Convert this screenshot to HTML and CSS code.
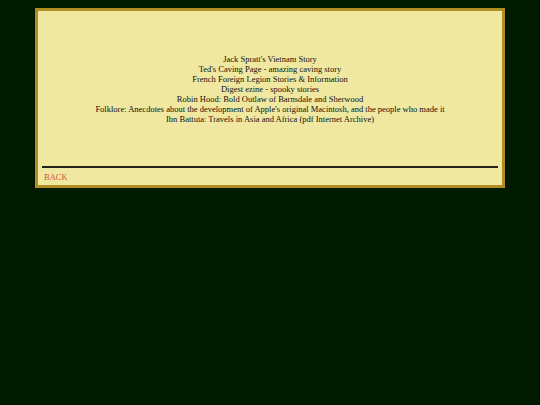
FILE: index.html
```html
<!DOCTYPE html>
<html>
<head>
<meta charset="utf-8">
<link rel="stylesheet" href="styles.css">
</head>
<body>
<div class="box">
  <div class="links">
    <a href="#">Jack Spratt's Vietnam Story</a>
    <a href="#">Ted's Caving Page - amazing caving story</a>
    <a href="#">French Foreign Legion Stories &amp; Information</a>
    <a href="#">Digest ezine - spooky stories</a>
    <a href="#">Robin Hood: Bold Outlaw of Barnsdale and Sherwood</a>
    <a href="#">Folklore: Anecdotes about the development of Apple's original Macintosh, and the people who made it</a>
    <a href="#">Ibn Battuta: Travels in Asia and Africa (pdf Internet Archive)</a>
  </div>
  <hr class="rule">
  <a class="back" href="#">BACK</a>
</div>
</body>
</html>
```
FILE: styles.css
```css
html, body {
  margin: 0;
  padding: 0;
}
body {
  background: #001a00;
  font-family: "Liberation Serif", "Times New Roman", serif;
  padding: 8px 35px 0 35px;
}
.box {
  background: #f0e8a0;
  border: 3px solid #b08c22;
  padding: 0 4px;
  box-sizing: border-box;
  width: 470px;
  height: 180px;
  display: flex;
  flex-direction: column;
}
.links {
  display: flex;
  flex-direction: column;
  align-items: center;
  padding-top: 43px;
  font-size: 8.5px;
  line-height: 10px;
}
.links a {
  color: #111;
  text-decoration: none;
}
.rule {
  margin: 0;
  margin-top: 42px;
  border: 0;
  height: 2px;
  background: #222218;
}
.back {
  margin-top: 4px;
  margin-left: 2px;
  font-size: 8.5px;
  line-height: 10px;
  color: #d05040;
  text-decoration: none;
}
```
